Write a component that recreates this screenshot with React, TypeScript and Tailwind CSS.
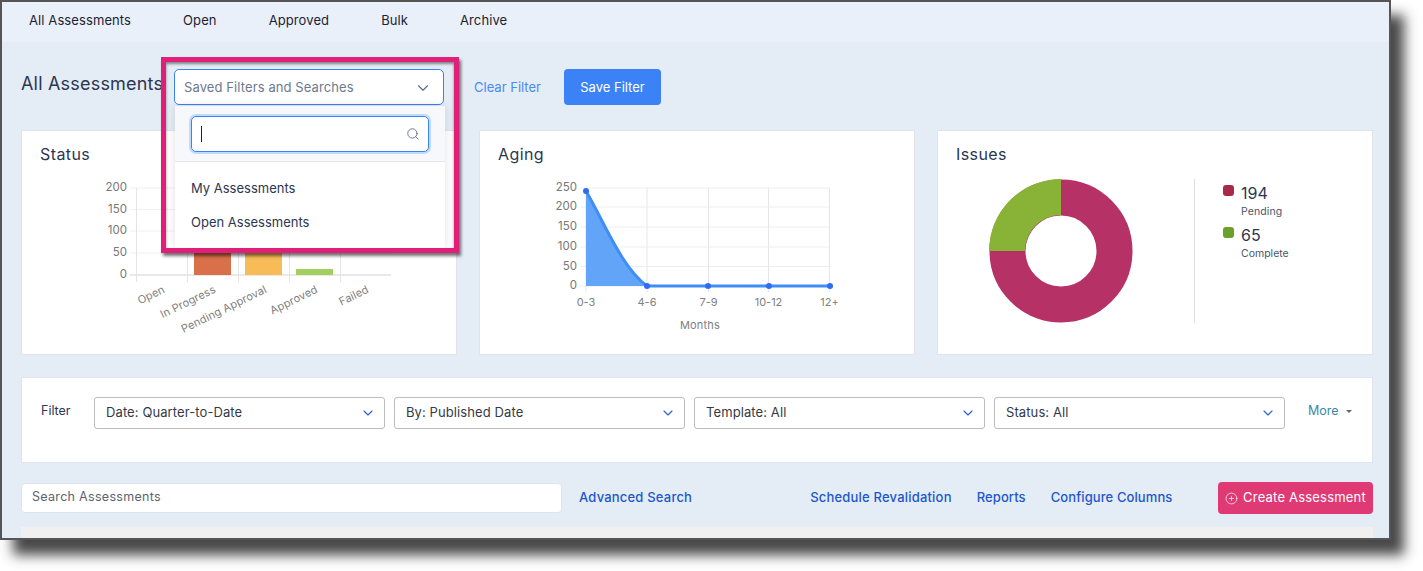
import { ChevronDown, CirclePlus, Search } from "lucide-react";

const navItems = ["All Assessments", "Open", "Approved", "Bulk", "Archive"];
const filters = ["Date: Quarter-to-Date", "By: Published Date", "Template: All", "Status: All"];

function StatusChart() {
  const ys = [188, 209.5, 231, 253, 275];
  const xs = [136.5, 187.5, 238.5, 289.5, 340.5];
  const yLabels = ["200", "150", "100", "50", "0"];
  const xLabels = ["Open", "In Progress", "Pending Approval", "Approved", "Failed"];
  return (
    <svg viewBox="22 170 434 184" className="w-[434px] h-[184px] block" fontFamily="Inter, sans-serif">
      {ys.map((y, i) => (
        <g key={y}>
          <line x1="130" x2="391" y1={y} y2={y} stroke={i === 4 ? "#e2e2e2" : "#f0f0f0"} strokeWidth={i === 4 ? 1.5 : 1} />
          <text x="127" y={y + 3} textAnchor="end" fontSize="11.5" fill="#777">{yLabels[i]}</text>
        </g>
      ))}
      {xs.map((x) => (
        <line key={x} x1={x} x2={x} y1="188" y2="282" stroke="#e4e4e4" />
      ))}
      <rect x="194" y="240" width="37" height="35" fill="#d8704a" />
      <rect x="245" y="240" width="37" height="35" fill="#f7bc57" />
      <rect x="296" y="269" width="37" height="6" fill="#a3cf5f" />
      {xLabels.map((label, i) => (
        <text
          key={label}
          x={xs[i] + 29}
          y="292"
          textAnchor="end"
          fontSize="11"
          letterSpacing="0.1"
          fill="#808080"
          transform={`rotate(-26 ${xs[i] + 29} 292)`}
        >
          {label}
        </text>
      ))}
    </svg>
  );
}

function AgingChart() {
  const ys = [188, 207, 227, 247, 266.5, 286];
  const xs = [586, 647, 708.5, 768.5, 829.5];
  const yLabels = ["250", "200", "150", "100", "50", "0"];
  const xLabels = ["0-3", "4-6", "7-9", "10-12", "12+"];
  return (
    <svg viewBox="480 170 434 184" className="w-[434px] h-[184px] block" fontFamily="Inter, sans-serif">
      {ys.map((y, i) => (
        <g key={y}>
          <line x1="580" x2="830" y1={y} y2={y} stroke="#eeeeee" />
          <text x="577" y={y + 3} textAnchor="end" fontSize="11.5" fill="#777">{yLabels[i]}</text>
        </g>
      ))}
      {xs.map((x, i) => (
        <g key={x}>
          <line x1={x} x2={x} y1="188" y2="292" stroke="#e6e6e6" />
          <text x={x} y="306" textAnchor="middle" fontSize="11" fill="#808080">{xLabels[i]}</text>
        </g>
      ))}
      <path d="M586 191 C604 222 622 268 647 286 L586 286 Z" fill="#62a4f8" />
      <path d="M586 191 C604 222 622 268 647 286 L830 286" fill="none" stroke="#3f8ef8" strokeWidth="3" />
      {[[586, 191], [647, 286], [708, 286], [769, 286], [830, 286]].map(([x, y]) => (
        <circle key={x} cx={x} cy={y} r="3" fill="#2f6bf5" />
      ))}
      <text x="700" y="329" textAnchor="middle" fontSize="11" letterSpacing="0.2" fill="#808080">Months</text>
    </svg>
  );
}

function IssuesChart() {
  return (
    <svg viewBox="0 0 144 144" className="w-[144px] h-[144px] block">
      <circle cx="72" cy="72" r="53.5" fill="none" stroke="#b53166" strokeWidth="36" />
      <path d="M72 0 A72 72 0 0 0 0 72 L36 72 A36 36 0 0 1 72 36 Z" fill="#88b337" />
    </svg>
  );
}

export default function App() {
  return (
    <div className="w-[1423px] h-[571px] bg-white overflow-hidden font-['Inter',sans-serif]">
      <div className="relative w-[1391px] h-[540px] border-2 border-[#555555] bg-[#e4ecf6] shadow-[13px_15px_12px_rgba(40,40,40,0.85)] overflow-hidden">
        <nav className="h-[41px] bg-[#eaf0f9] flex items-center gap-[52px] pl-[27px] pb-[2px] text-[13px] tracking-[0.1px] text-[#1c2333] border-b border-[#e6ebf3]">
          {navItems.map((item) => (
            <span key={item}>{item}</span>
          ))}
        </nav>

        <div className="pl-[19px] pr-[16px] pt-[26px]">
          <div className="flex items-center h-[36px]">
            <h1 className="w-[153px] shrink-0 text-[18px] tracking-[0.2px] font-normal text-[#2d3650] whitespace-nowrap overflow-hidden -mt-[8px]">All Assessments</h1>
            <div className="relative w-[270px] h-[36px] z-20">
              <div className="h-full bg-white border border-[#3b82f6] rounded-[5px] flex items-center justify-between pl-[9px] pr-[11px] pt-[2px] text-[13px] tracking-[0.1px] text-[#6b7a90]">
                <span>Saved Filters and Searches</span>
                <ChevronDown size={18} strokeWidth={1.5} className="text-[#5f6b7d]" />
              </div>
              <div className="absolute left-[1px] top-[37px] w-[270px] h-[142px] bg-white shadow-[0_0_10px_rgba(0,0,0,0.12)] rounded-t-[4px]">
                <div className="h-[56px] bg-[#f6f8fc] border-b border-[#e5e7eb] px-[16px] pt-[10px]">
                  <div className="h-[36px] bg-white border border-[#3b82f6] rounded-[5px] shadow-[0_0_0_2px_#bfdbfe] flex items-center justify-between pl-[9px] pr-[8px]">
                    <span className="w-px h-[16px] bg-[#1c2333]" />
                    <Search size={14} strokeWidth={1.5} className="text-[#5f6b7d]" />
                  </div>
                </div>
                <ul className="text-[13px] text-[#2d3650] pl-[16px] pt-[10px]">
                  <li className="h-[34px] flex items-center">My Assessments</li>
                  <li className="h-[34px] flex items-center">Open Assessments</li>
                </ul>
              </div>
            </div>
            <a className="ml-[30px] text-[13px] text-[#4a8af4] pt-[2px]">Clear Filter</a>
            <button className="ml-[23px] w-[97px] h-[36px] bg-[#3b82f6] rounded-[4px] text-[13px] text-white pt-[2px]">Save Filter</button>
          </div>

          <div className="flex gap-[22px] mt-[25px]">
            <section className="w-[436px] h-[225px] bg-white border border-[#e0e4ea]">
              <h2 className="h-[39px] pl-[18px] pt-[13px] text-[16px] tracking-[0.4px] leading-[20px] font-normal text-[#2d3650]">Status</h2>
              <StatusChart />
            </section>
            <section className="w-[436px] h-[225px] bg-white border border-[#e0e4ea]">
              <h2 className="h-[39px] pl-[18px] pt-[13px] text-[16px] tracking-[0.4px] leading-[20px] font-normal text-[#2d3650]">Aging</h2>
              <AgingChart />
            </section>
            <section className="w-[436px] h-[225px] bg-white border border-[#e0e4ea] relative">
              <h2 className="h-[39px] pl-[18px] pt-[13px] text-[16px] tracking-[0.4px] leading-[20px] font-normal text-[#2d3650]">Issues</h2>
              <div className="flex pt-[9px] pl-[51px]">
                <IssuesChart />
                <div className="ml-[61px] w-px h-[144px] bg-[#dcdfe4]" />
                <div className="ml-[28px] pt-[5px] text-[#2d3650]">
                  <div className="flex gap-[7px]">
                    <span className="w-[11px] h-[11px] mt-[1px] rounded-[3px] bg-[#a62a4a]" />
                    <div>
                      <div className="text-[16px] leading-[18px]">194</div>
                      <div className="text-[10.5px] tracking-[0.1px] leading-[14px] mt-[3px] text-[#4b5568]">Pending</div>
                    </div>
                  </div>
                  <div className="flex gap-[7px] mt-[7px]">
                    <span className="w-[11px] h-[11px] mt-[1px] rounded-[3px] bg-[#6aa02b]" />
                    <div>
                      <div className="text-[16px] leading-[18px]">65</div>
                      <div className="text-[10.5px] leading-[14px] mt-[3px] text-[#4b5568]">Complete</div>
                    </div>
                  </div>
                </div>
              </div>
            </section>
          </div>

          <section className="mt-[22px] w-[1352px] h-[86px] bg-white border border-[#e0e4ea] flex items-start pt-[19px] pl-[19px]">
            <span className="w-[53px] text-[12.5px] leading-[28px] text-[#2d3650]">Filter</span>
            <div className="flex gap-[9px]">
              {filters.map((f) => (
                <div key={f} className="w-[291px] h-[32px] border border-[#bcbcbc] rounded-[3px] flex items-center justify-between pl-[11px] pr-[8px] text-[13px] tracking-[0.1px] text-[#333a47]">
                  <span>{f}</span>
                  <ChevronDown size={16} strokeWidth={1.75} className="text-[#2f62d8]" />
                </div>
              ))}
            </div>
            <span className="ml-[23px] text-[12.5px] leading-[28px] text-[#3b8aa0]">More</span>
            <span className="ml-[7px] mt-[13px] w-0 h-0 border-x-[3px] border-x-transparent border-t-[3px] border-t-[#666666]" />
          </section>

          <div className="mt-[19px] w-[1352px] h-[32px] flex items-center">
            <div className="w-[541px] h-[30px] -mt-[1px] bg-white border border-[#dde3ec] rounded-[4px] flex items-center pl-[10px] text-[12.5px] tracking-[0.3px] text-[#5c6470]">Search Assessments</div>
            <a className="ml-[17px] text-[13px] tracking-[0.2px] font-medium text-[#1d57c9]">Advanced Search</a>
            <a className="ml-[118px] text-[13px] tracking-[0.2px] font-medium text-[#1d57c9]">Schedule Revalidation</a>
            <a className="ml-[25px] text-[13px] tracking-[0.1px] font-medium text-[#1d57c9]">Reports</a>
            <a className="ml-[25px] text-[13px] tracking-[0.1px] font-medium text-[#1d57c9]">Configure Columns</a>
            <button className="ml-auto w-[155px] h-[32px] bg-[#e03a75] rounded-[4px] flex items-center justify-center gap-[5px] text-[13px] tracking-[0.2px] text-white">
              <CirclePlus size={13} strokeWidth={1.25} />
              Create Assessment
            </button>
          </div>

          <div className="mt-[13px] w-[1352px] h-[20px] bg-[#f0f0f0]" />
        </div>

        {/* pink highlight drawn over the page */}
        <div className="absolute left-[159px] top-[55px] w-[298px] h-[196px] border-[5px] border-[#e01f78] shadow-[2px_3px_3px_rgba(0,0,0,0.55),inset_0_2px_3px_rgba(0,0,0,0.45)] pointer-events-none z-30" />
      </div>
    </div>
  );
}
